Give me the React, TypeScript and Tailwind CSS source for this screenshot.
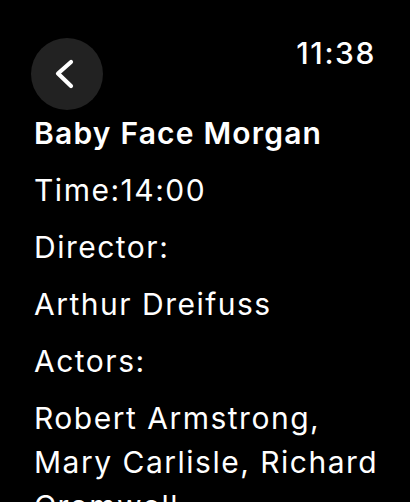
export default function App() {
  const font = { fontFamily: 'Inter, "Open Sans", sans-serif' };
  return (
    <div className="w-[410px] h-[502px] bg-black text-white overflow-hidden" style={font}>
      <div className="flex items-start justify-between pt-[35px] pl-[31px] pr-[34px]">
        <button className="mt-[3px] w-[72px] h-[72px] rounded-full bg-[#222222] flex items-center justify-center">
          <svg width="72" height="72" viewBox="0 0 72 72" fill="none">
            <path d="M40 24 L27 35.5 L40 48" stroke="white" strokeWidth="4.2" strokeLinecap="round" strokeLinejoin="round" />
          </svg>
        </button>
        <div className="text-[30px] leading-[36px] font-medium tracking-[1.6px]">11:38</div>
      </div>
      <div className="pl-[34px] pr-[20px] pt-[1px] flex flex-col gap-[13px] text-[30px] leading-[44px] tracking-[1.5px]">
        <div className="font-semibold tracking-[1.2px]">Baby Face Morgan</div>
        <div>Time:14:00</div>
        <div>Director:</div>
        <div>Arthur Dreifuss</div>
        <div>Actors:</div>
        <div>Robert Armstrong, Mary Carlisle, Richard Cromwell</div>
      </div>
    </div>
  );
}
